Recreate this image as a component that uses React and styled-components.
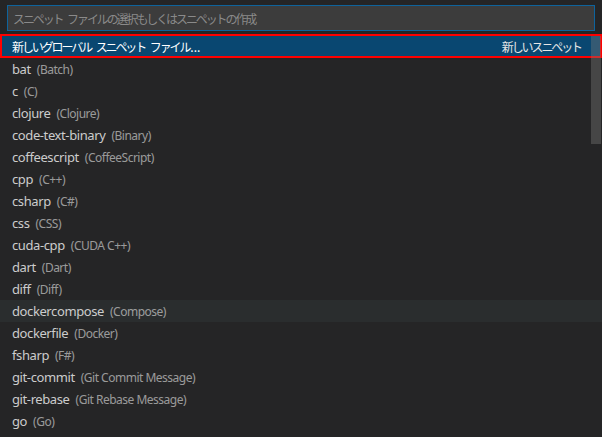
import React from "react";
import styled, { createGlobalStyle } from "styled-components";

const GlobalStyle = createGlobalStyle`
  html, body {
    margin: 0;
    padding: 0;
    background: #252526;
  }
  * {
    box-sizing: border-box;
  }
`;

const Widget = styled.div`
  position: relative;
  width: 602px;
  height: 437px;
  overflow: hidden;
  background: #252526;
  font-family: "Segoe UI", "Noto Sans", "Noto Sans CJK JP", sans-serif;
  font-size: 13px;
  letter-spacing: -0.4px;
  color: #cccccc;
`;

const InputWrap = styled.div`
  padding: 5px 7px 3px 7px;
`;

const Input = styled.input`
  display: block;
  width: 100%;
  height: 26px;
  padding: 0 5px;
  background: #3c3c3c;
  border: 1px solid #0e639c;
  outline: none;
  color: #cccccc;
  font-family: "Noto Sans CJK JP", sans-serif;
  font-size: 12px;
  letter-spacing: -2.1px;
  word-spacing: 4px;
  &::placeholder {
    color: #8a8a8a;
  }
`;

const List = styled.div`
  display: flex;
  flex-direction: column;
`;

const Row = styled.div`
  display: flex;
  align-items: center;
  height: ${(p) => (p.$selected ? "24px" : "22px")};
  padding: 0 19px 0 ${(p) => (p.$selected ? "10px" : "12px")};
  white-space: nowrap;
  background: ${(p) =>
    p.$selected ? "#094771" : p.$hover ? "#2a2d2e" : "transparent"};
  border: ${(p) => (p.$selected ? "2px solid #ff0000" : "none")};
  color: ${(p) => (p.$selected ? "#ffffff" : "#cccccc")};
`;

const JpText = styled.span`
  flex: ${(p) => (p.$grow ? 1 : "none")};
  font-family: "Noto Sans CJK JP", sans-serif;
  font-size: 12px;
  letter-spacing: -2.1px;
  word-spacing: 4px;
  color: ${(p) => (p.$dim ? "#e6e6e6" : "inherit")};
`;

const Ellipsis = styled.span`
  letter-spacing: 0;
  margin-left: 1px;
`;

const Desc = styled.span`
  margin-left: 6px;
  font-size: 12px;
  letter-spacing: -0.5px;
  color: #cccccc;
  opacity: 0.7;
`;

const Scrollbar = styled.div`
  position: absolute;
  right: 1px;
  top: 36px;
  width: 10px;
  height: 108px;
  background: rgba(121, 121, 121, 0.4);
`;

const languages = [
  ["bat", "Batch"],
  ["c", "C"],
  ["clojure", "Clojure"],
  ["code-text-binary", "Binary"],
  ["coffeescript", "CoffeeScript"],
  ["cpp", "C++"],
  ["csharp", "C#"],
  ["css", "CSS"],
  ["cuda-cpp", "CUDA C++"],
  ["dart", "Dart"],
  ["diff", "Diff"],
  ["dockercompose", "Compose"],
  ["dockerfile", "Docker"],
  ["fsharp", "F#"],
  ["git-commit", "Git Commit Message"],
  ["git-rebase", "Git Rebase Message"],
  ["go", "Go"],
];

export default function App() {
  return (
    <Widget>
      <GlobalStyle />
      <InputWrap>
        <Input placeholder="スニペット ファイルの選択もしくはスニペットの作成" />
      </InputWrap>
      <List>
        <Row $selected>
          <JpText $grow>
            新しいグローバル スニペット ファイル<Ellipsis>...</Ellipsis>
          </JpText>
          <JpText $dim>新しいスニペット</JpText>
        </Row>
        {languages.map(([id, name]) => (
          <Row key={id} $hover={id === "dockercompose"}>
            <span>{id}</span>
            <Desc>({name})</Desc>
          </Row>
        ))}
      </List>
      <Scrollbar />
    </Widget>
  );
}
